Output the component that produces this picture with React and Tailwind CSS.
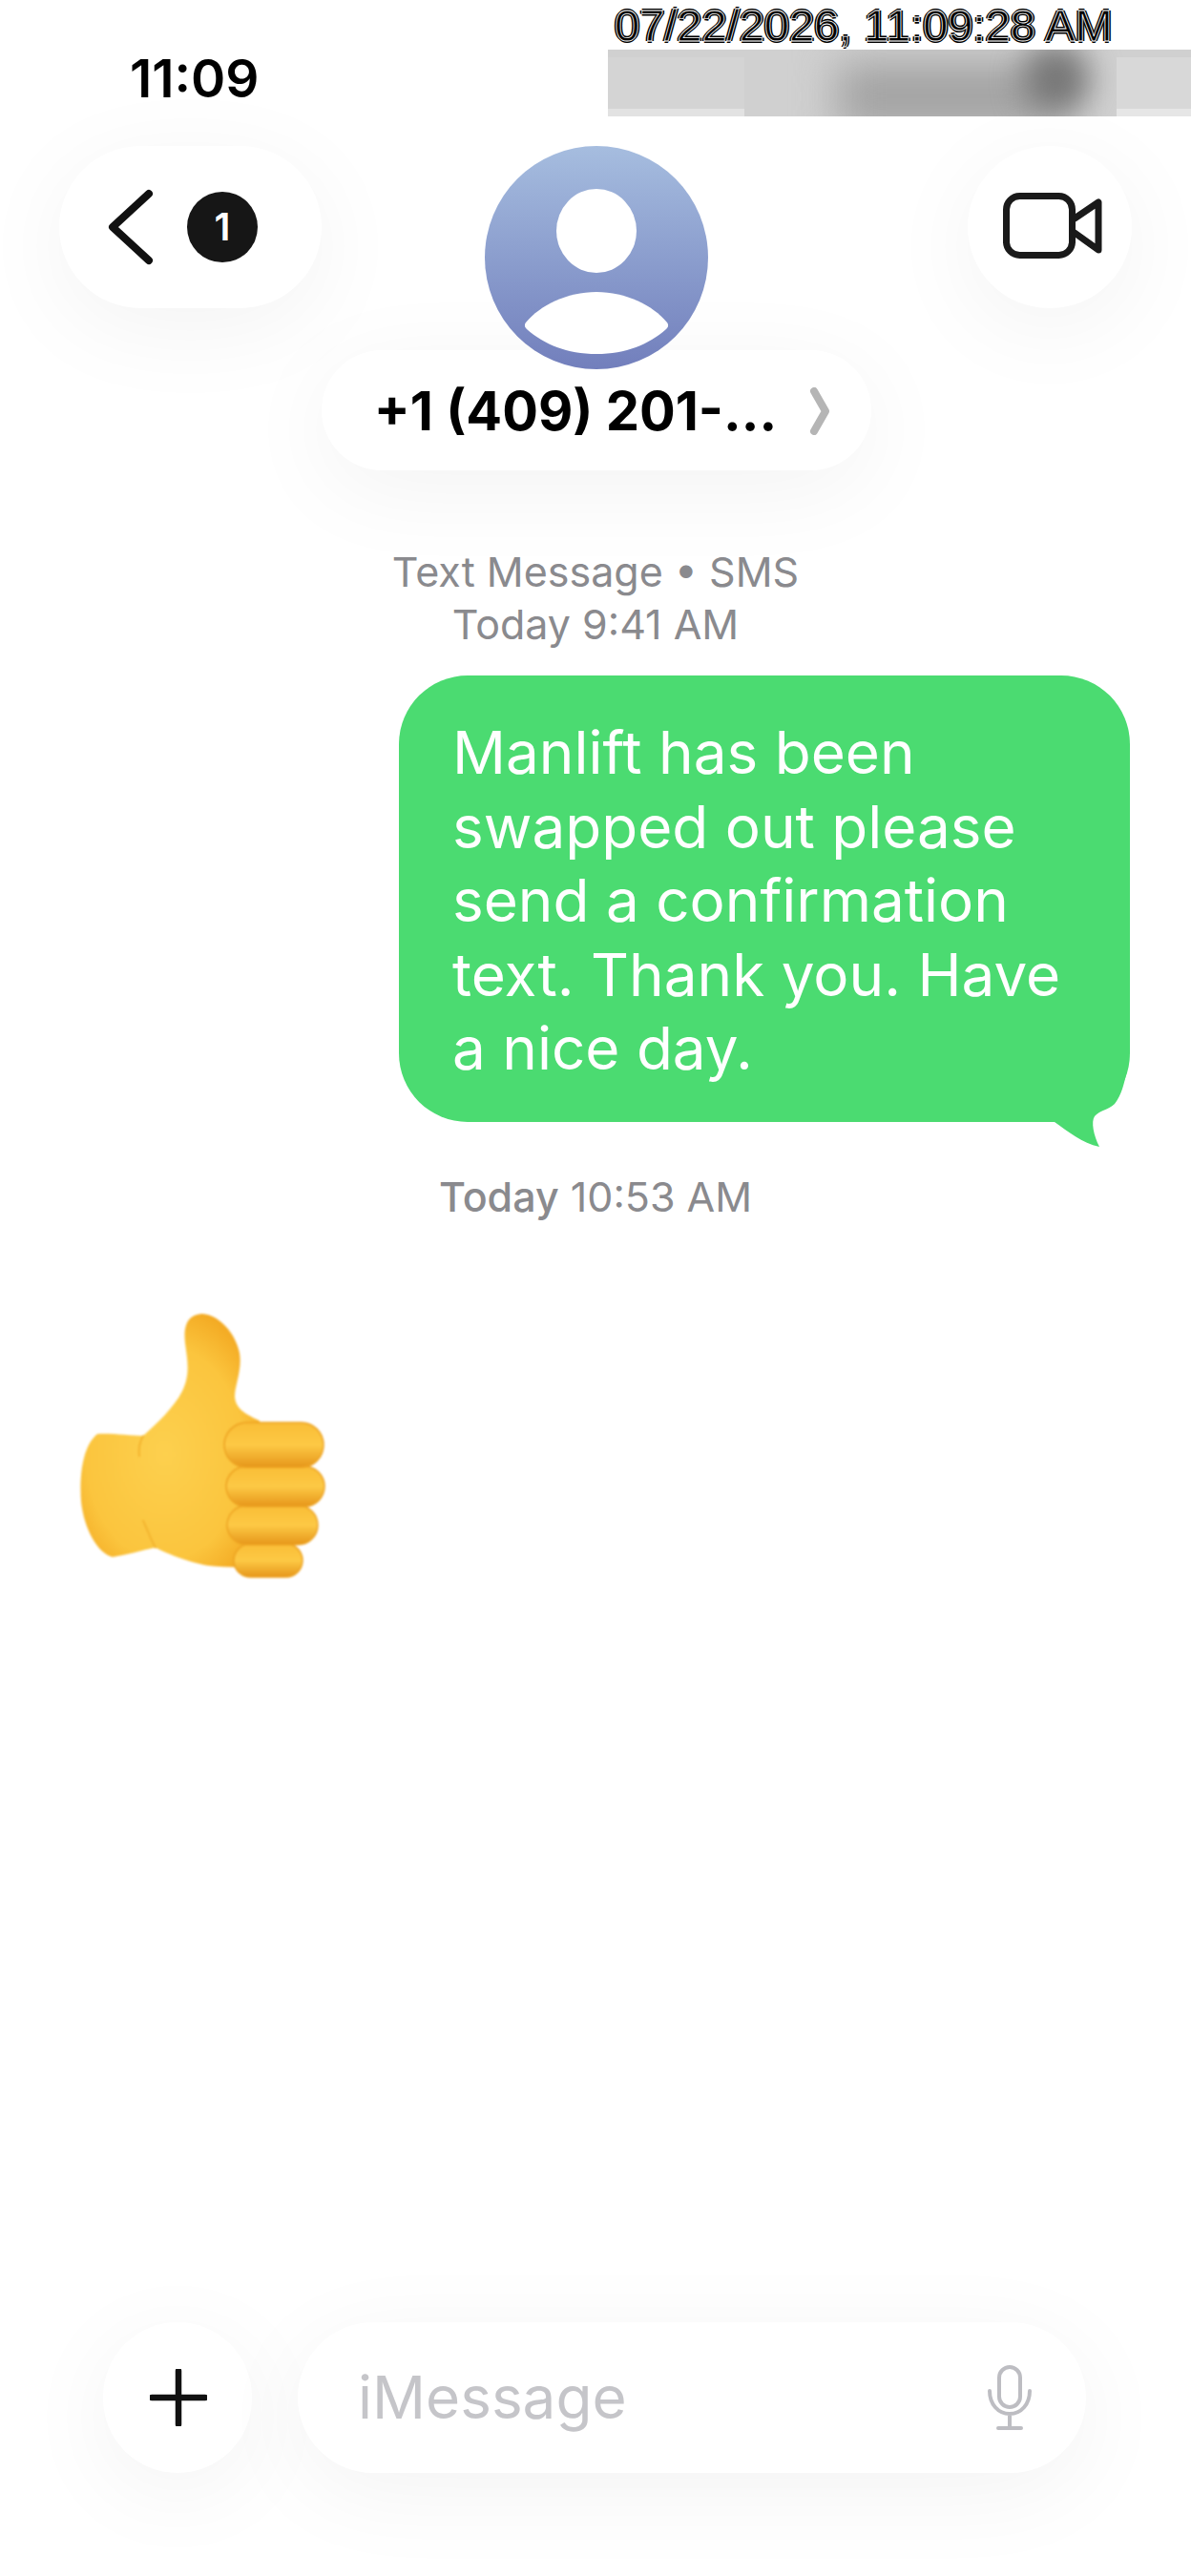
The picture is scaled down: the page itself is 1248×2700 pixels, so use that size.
const sans = "font-['Inter','Liberation_Sans',sans-serif]";

function Avatar() {
  return (
    <div className="relative z-10 h-[234px] w-[234px] rounded-full bg-gradient-to-b from-[#a6bddf] to-[#727fbc]">
      <svg viewBox="0 0 234 234" className="h-full w-full">
        <ellipse cx="117" cy="89" rx="42" ry="44" fill="#fff" />
        <path d="M43 185C58 167 86 153 117 153C148 153 176 167 191 185C193 188 192 190 190 192C172 208 148 218 117 218C86 218 62 208 44 192C42 190 41 188 43 185Z" fill="#fff" />
      </svg>
    </div>
  );
}

function ThumbsUp() {
  const fingers = [
    { x: 195, y: 278, w: 72, h: 35 },
    { x: 188, y: 238, w: 95, h: 41 },
    { x: 187, y: 197, w: 103, h: 42 },
    { x: 185, y: 151, w: 104, h: 47 },
  ];
  return (
    <svg viewBox="0 0 320 330" className="h-[330px] w-[320px] blur-[1px]">
      <defs>
        <radialGradient id="palm" cx="0.45" cy="0.55" r="0.6">
          <stop offset="0" stopColor="#fdd04e" />
          <stop offset="0.7" stopColor="#fbc53e" />
          <stop offset="1" stopColor="#f3a922" />
        </radialGradient>
        <linearGradient id="finger" x1="0" y1="0" x2="0" y2="1">
          <stop offset="0" stopColor="#f9bd36" />
          <stop offset="0.5" stopColor="#fdc945" />
          <stop offset="1" stopColor="#e6961a" />
        </linearGradient>
      </defs>
      <path
        d="M52 163C68 162 86 165 100 165C114 152 132 136 141 118C150 100 146 84 144 68C142 50 146 38 162 37C180 38 197 58 201 78C204 96 196 112 196 124C197 136 206 142 222 149L230 300C214 304 190 303 168 301C146 297 124 288 113 282C98 285 82 290 68 292C52 288 38 262 35 234C33 208 36 176 52 163Z"
        fill="url(#palm)"
      />
      <path d="M100 165C96 172 95 178 96 186M113 282C108 274 104 262 100 254" fill="none" stroke="#f3b42f" strokeWidth="2" strokeLinecap="round" />
      {fingers.map((f) => (
        <rect key={f.y} x={f.x} y={f.y} width={f.w} height={f.h} rx={f.h / 2} fill="url(#finger)" stroke="#eda322" strokeWidth="1.5" />
      ))}
    </svg>
  );
}

export default function App() {
  return (
    <div className={`relative flex h-[2700px] w-[1248px] flex-col overflow-hidden bg-white ${sans}`}>
      {/* redacted capture stamp, sits on top of the status bar */}
      <div className="absolute right-0 top-[52px] z-20 h-[70px] w-[611px] overflow-hidden bg-[#d0d0d0]">
        <div className="absolute left-[240px] top-[14px] h-[70px] w-[230px] bg-[#a2a2a2] blur-[22px]" />
        <div className="absolute left-[435px] top-[-6px] h-[74px] w-[70px] rounded-full bg-[#777] blur-[16px]" />
        <div className="absolute left-0 top-[8px] h-[54px] w-[143px] bg-[#d4d4d4]" />
        <div className="absolute left-0 top-[62px] h-[8px] w-[143px] bg-[#e2e2e2]" />
        <div className="absolute right-0 top-[8px] h-[54px] w-[78px] bg-[#d8d8d8]" />
        <div className="absolute right-0 top-[62px] h-[8px] w-[78px] bg-[#e6e6e6]" />
      </div>
      <div className="absolute left-[644px] top-[-1px] z-30 whitespace-nowrap font-['Liberation_Sans',sans-serif] text-[47px] leading-[56px] text-black [-webkit-text-stroke:0.8px_white] [text-shadow:2px_0_0_#000,-2px_0_0_#000,0_2px_0_#000,0_-2px_0_#000]">
        07/22/2026, 11:09:28 AM
      </div>

      {/* status bar */}
      <div className="h-[153px] pl-[136px] pt-[52px]">
        <span className="text-[55px] font-semibold leading-[60px] text-black">11:09</span>
      </div>

      {/* conversation header */}
      <div className="grid grid-cols-[1fr_auto_1fr] px-[62px]">
        <div className="flex h-[170px] w-[275px] items-center justify-self-start rounded-full bg-white pl-[50px] shadow-[0_20px_100px_rgba(0,0,0,0.05)]">
          <svg viewBox="0 0 50 80" className="h-[80px] w-[50px]">
            <path d="M44 5L6 40L44 75" fill="none" stroke="#111" strokeWidth="8" strokeLinecap="round" strokeLinejoin="round" />
          </svg>
          <div className="ml-[34px] flex h-[74px] w-[74px] items-center justify-center rounded-full bg-[#161616] text-[40px] font-semibold text-white">1</div>
        </div>
        <div className="flex flex-col items-center">
          <Avatar />
          <div className="-mt-[20px] flex h-[126px] w-[576px] items-center justify-center rounded-full bg-white pl-[12px] pt-[2px] shadow-[0_20px_100px_rgba(0,0,0,0.05)]">
            <span className="text-[56px] font-bold leading-none text-black">+1 (409) 201-...</span>
            <svg viewBox="0 0 22 50" className="ml-[34px] h-[50px] w-[22px]">
              <path d="M5 4L17 25L5 46" fill="none" stroke="#b5b5b5" strokeWidth="8" strokeLinecap="round" strokeLinejoin="round" />
            </svg>
          </div>
        </div>
        <div className="flex h-[170px] w-[172px] items-center justify-center justify-self-end rounded-full bg-white pl-[6px] shadow-[0_20px_100px_rgba(0,0,0,0.05)]">
          <svg viewBox="0 0 104 72" className="h-[72px] w-[104px]">
            <rect x="3.5" y="3.5" width="69" height="62" rx="14" fill="none" stroke="#1a1a1a" strokeWidth="7" />
            <path d="M75 27L100 10V60L75 42" fill="none" stroke="#1a1a1a" strokeWidth="7" strokeLinecap="round" strokeLinejoin="round" />
          </svg>
        </div>
      </div>

      {/* thread */}
      <div className="mt-[79px] flex flex-col items-center text-[43px] leading-[55px] text-[#8a8a8e]">
        <span>Text Message • SMS</span>
        <span>Today 9:41 AM</span>
      </div>

      <div className="relative mr-[64px] mt-[26px] h-[468px] w-[766px] self-end rounded-[72px] bg-[#4bdb71] px-[56px] pt-[42px] text-[62px] leading-[77.5px] text-white">
        <p>Manlift has been swapped out please send a confirmation text. Thank you. Have a nice day.</p>
        <svg viewBox="0 0 100 80" className="absolute bottom-[-26px] right-0 h-[80px] w-[100px]">
          <path d="M97 0C94 14 91 26 84 35C78 41 68 42 63 48C59 54 62 68 68 80C50 76 35 64 21 54L0 54L0 0Z" fill="#4bdb71" />
        </svg>
      </div>

      <div className="mt-[51px] text-center text-[43px] leading-[55px] text-[#8a8a8e]">
        <span className="font-medium">Today</span> 10:53 AM
      </div>

      <div className="mt-[58px] pl-[50px]">
        <ThumbsUp />
      </div>

      {/* composer */}
      <div className="mt-auto flex items-center gap-[48px] pb-[108px] pl-[108px]">
        <div className="flex h-[158px] w-[156px] items-center justify-center rounded-full bg-white pl-[2px] shadow-[0_20px_100px_rgba(0,0,0,0.05)]">
          <svg viewBox="0 0 60 60" className="h-[60px] w-[60px]">
            <path d="M30 2V58M2 30H58" fill="none" stroke="#111" strokeWidth="6.5" strokeLinecap="round" />
          </svg>
        </div>
        <div className="flex h-[158px] w-[826px] items-center justify-between rounded-full bg-white pl-[63px] pr-[56px] shadow-[0_20px_100px_rgba(0,0,0,0.05)]">
          <span className="text-[62px] leading-none text-[#c5c5c9]">iMessage</span>
          <svg viewBox="0 0 48 70" className="h-[70px] w-[48px]">
            <rect x="13" y="3" width="22" height="42" rx="11" fill="none" stroke="#bdbdc2" strokeWidth="4" />
            <path d="M3 28C3 42 12 52 24 52C36 52 45 42 45 28M24 52V67M12 67H36" fill="none" stroke="#bdbdc2" strokeWidth="4" strokeLinecap="round" />
          </svg>
        </div>
      </div>
    </div>
  );
}
